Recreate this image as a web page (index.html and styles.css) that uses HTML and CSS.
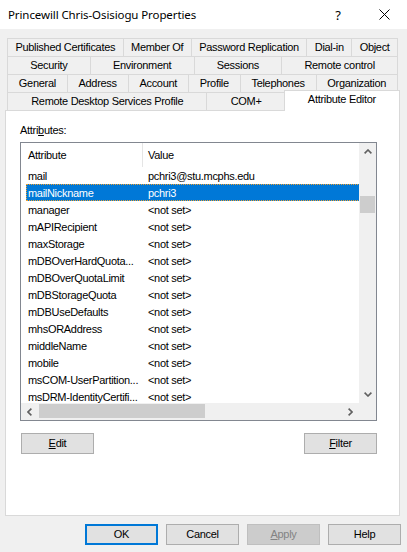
FILE: index.html
```html
<!DOCTYPE html>
<html>
<head>
<meta charset="utf-8">
<title>Princewill Chris-Osisiogu Properties</title>
<link rel="stylesheet" href="styles.css">
</head>
<body>
<div class="titlebar">
  <div class="title">Princewill Chris-Osisiogu Properties</div>
  <div class="tbtn help">?</div>
  <div class="tbtn close">
    <svg width="11" height="11" viewBox="0 0 11 11"><path d="M0.5 0.5 L10.5 10.5 M10.5 0.5 L0.5 10.5" stroke="#000" stroke-width="1" fill="none"/></svg>
  </div>
</div>

<div class="tabs">
  <div class="tabrow">
    <div class="tab">Published Certificates</div>
    <div class="tab">Member Of</div>
    <div class="tab">Password Replication</div>
    <div class="tab">Dial-in</div>
    <div class="tab">Object</div>
  </div>
  <div class="tabrow">
    <div class="tab">Security</div>
    <div class="tab">Environment</div>
    <div class="tab">Sessions</div>
    <div class="tab">Remote control</div>
  </div>
  <div class="tabrow">
    <div class="tab">General</div>
    <div class="tab">Address</div>
    <div class="tab">Account</div>
    <div class="tab">Profile</div>
    <div class="tab">Telephones</div>
    <div class="tab">Organization</div>
  </div>
  <div class="tabrow">
    <div class="tab">Remote Desktop Services Profile</div>
    <div class="tab">COM+</div>
    <div class="tab sel">Attribute Editor</div>
  </div>
</div>

<div class="panel">
  <div class="label">Attri<u>b</u>utes:</div>
  <div class="list">
    <div class="content">
      <div class="header">
        <div class="hcol1">Attribute</div>
        <div class="hcol2">Value</div>
      </div>
      <div class="row"><div class="c1">mail</div><div class="c2">pchri3@stu.mcphs.edu</div></div>
      <div class="row selected"><div class="c1">mailNickname</div><div class="c2">pchri3</div></div>
      <div class="row"><div class="c1">manager</div><div class="c2">&lt;not set&gt;</div></div>
      <div class="row"><div class="c1">mAPIRecipient</div><div class="c2">&lt;not set&gt;</div></div>
      <div class="row"><div class="c1">maxStorage</div><div class="c2">&lt;not set&gt;</div></div>
      <div class="row"><div class="c1">mDBOverHardQuota...</div><div class="c2">&lt;not set&gt;</div></div>
      <div class="row"><div class="c1">mDBOverQuotaLimit</div><div class="c2">&lt;not set&gt;</div></div>
      <div class="row"><div class="c1">mDBStorageQuota</div><div class="c2">&lt;not set&gt;</div></div>
      <div class="row"><div class="c1">mDBUseDefaults</div><div class="c2">&lt;not set&gt;</div></div>
      <div class="row"><div class="c1">mhsORAddress</div><div class="c2">&lt;not set&gt;</div></div>
      <div class="row"><div class="c1">middleName</div><div class="c2">&lt;not set&gt;</div></div>
      <div class="row"><div class="c1">mobile</div><div class="c2">&lt;not set&gt;</div></div>
      <div class="row"><div class="c1">msCOM-UserPartition...</div><div class="c2">&lt;not set&gt;</div></div>
      <div class="row"><div class="c1">msDRM-IdentityCertifi...</div><div class="c2">&lt;not set&gt;</div></div>
    </div>
    <div class="vscroll">
      <div class="arrow"><svg width="8" height="5" viewBox="0 0 8 5"><polyline points="0.6,4.4 4,1 7.4,4.4" fill="none" stroke="#606060" stroke-width="1.6"/></svg></div>
      <div class="vtrack"><div class="vthumb"></div></div>
      <div class="arrow"><svg width="8" height="5" viewBox="0 0 8 5"><polyline points="0.6,0.6 4,4 7.4,0.6" fill="none" stroke="#606060" stroke-width="1.6"/></svg></div>
    </div>
    <div class="hscroll">
      <div class="arrow"><svg width="5" height="8" viewBox="0 0 5 8"><polyline points="4.4,0.6 1,4 4.4,7.4" fill="none" stroke="#606060" stroke-width="1.6"/></svg></div>
      <div class="htrack"><div class="hthumb"></div></div>
      <div class="arrow"><svg width="5" height="8" viewBox="0 0 5 8"><polyline points="0.6,0.6 4,4 0.6,7.4" fill="none" stroke="#606060" stroke-width="1.6"/></svg></div>
    </div>
    <div class="corner"></div>
  </div>
  <div class="panelbtns">
    <div class="btn"><u>E</u>dit</div>
    <div class="btn"><u>F</u>ilter</div>
  </div>
</div>

<div class="footer">
  <div class="btn default">OK</div>
  <div class="btn">Cancel</div>
  <div class="btn disabled"><u>A</u>pply</div>
  <div class="btn">Help</div>
</div>
</body>
</html>
```

FILE: styles.css
```css
html, body {
  margin: 0;
  padding: 0;
}
body {
  width: 407px;
  height: 552px;
  overflow: hidden;
  background: #f0f0f0;
  color: #000;
  font-family: "Liberation Sans", Arial, sans-serif;
  font-size: 11px;
  letter-spacing: -0.3px;
}

/* title bar */
.titlebar {
  height: 29px;
  background: #fff;
  display: flex;
  align-items: center;
}
.title {
  flex: 1;
  padding-left: 8px;
  font-family: "Noto Sans", sans-serif;
  font-size: 11.5px;
  letter-spacing: -0.1px;
}
.tbtn {
  width: 46px;
  height: 29px;
  display: flex;
  align-items: center;
  justify-content: center;
}
.help {
  font-family: "Noto Sans", sans-serif;
  font-size: 13px;
  letter-spacing: 0;
}

/* tabs */
.tabs {
  padding: 9px 0 0 7px;
}
.tabrow {
  display: flex;
  width: 391px;
  height: 18px;
}
.tab {
  flex: 1 1 auto;
  box-sizing: border-box;
  height: 18px;
  border: 1px solid #d9d9d9;
  border-bottom: 0;
  padding: 0 6px;
  text-align: center;
  line-height: 16px;
  white-space: nowrap;
  background: #f0f0f0;
}
.tab + .tab {
  margin-left: -1px;
}
.tab.sel {
  background: #fff;
  height: 21px;
  margin: -2px -2px 0 -2px;
  position: relative;
  z-index: 1;
}

/* panel */
.panel {
  box-sizing: border-box;
  margin-left: 5px;
  width: 395px;
  height: 406px;
  border: 1px solid #d9d9d9;
  background: #fff;
  padding: 12px 0 0 14px;
}
.label {
  height: 14px;
  line-height: 14px;
  margin-bottom: 5px;
}
.list {
  box-sizing: border-box;
  width: 357px;
  height: 279px;
  border: 1px solid #828790;
  display: grid;
  grid-template-columns: 338px 17px;
  grid-template-rows: 260px 17px;
}
.content {
  overflow: hidden;
  background: #fff;
}
.header {
  display: flex;
  height: 24px;
  line-height: 24px;
}
.hcol1 {
  box-sizing: border-box;
  width: 122px;
  padding-left: 7px;
  border-right: 1px solid #e5e5e5;
}
.hcol2 {
  padding-left: 5px;
}
.row {
  display: flex;
  width: 420px;
  height: 17px;
  margin-left: 5px;
  white-space: nowrap;
}
.c1, .c2 {
  box-sizing: border-box;
  height: 17px;
  padding-top: 1px;
  line-height: 16px;
}
.c1 {
  width: 116px;
  padding-left: 2px;
  overflow: hidden;
}
.c2 {
  padding-left: 6px;
}
.row.selected {
  background: #0078d7;
  color: #fff;
  outline: 1px dotted #f0a030;
  outline-offset: -1px;
}

/* scrollbars */
.vscroll, .hscroll, .corner {
  background: #f0f0f0;
}
.vscroll {
  display: flex;
  flex-direction: column;
}
.hscroll {
  display: flex;
}
.arrow {
  width: 17px;
  height: 17px;
  flex: none;
  display: flex;
  align-items: center;
  justify-content: center;
}
.vtrack {
  flex: 1;
  padding-top: 36px;
}
.vthumb {
  margin-left: 1px;
  width: 15px;
  height: 17px;
  background: #cdcdcd;
}
.htrack {
  flex: 1;
  padding-top: 1px;
}
.hthumb {
  margin-left: 1px;
  width: 166px;
  height: 14px;
  background: #cdcdcd;
}

/* buttons */
.panelbtns {
  display: flex;
  justify-content: space-between;
  width: 356px;
  margin: 12px 0 0 1px;
}
.btn {
  box-sizing: border-box;
  width: 73px;
  height: 21px;
  background: #e1e1e1;
  border: 1px solid #adadad;
  text-align: center;
  line-height: 19px;
}
.btn.default {
  border: 2px solid #0078d7;
  line-height: 17px;
}
.btn.disabled {
  background: #cccccc;
  border-color: #bfbfbf;
  color: #838383;
}
.footer {
  display: flex;
  justify-content: flex-end;
  gap: 8px;
  padding: 8px 6px 0 0;
}
```
